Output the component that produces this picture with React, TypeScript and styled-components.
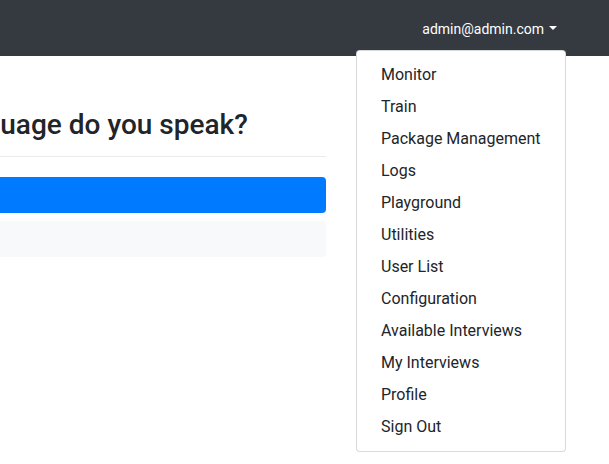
import styled, { createGlobalStyle } from "styled-components";

const menuItems = [
  "Monitor",
  "Train",
  "Package Management",
  "Logs",
  "Playground",
  "Utilities",
  "User List",
  "Configuration",
  "Available Interviews",
  "My Interviews",
  "Profile",
  "Sign Out",
];

const GlobalStyle = createGlobalStyle`
  html, body {
    margin: 0;
    padding: 0;
    overflow: hidden;
    background: #fff;
  }
  body {
    font-family: Roboto, "Liberation Sans", sans-serif;
    font-size: 16px;
    line-height: 1.5;
    color: #212529;
  }
  * {
    box-sizing: border-box;
  }
`;

const Page = styled.div`
  width: 609px;
  height: 464px;
  overflow: hidden;
`;

const Navbar = styled.nav`
  height: 56px;
  padding: 8px 44px 8px 16px;
  background: #343a40;
  display: flex;
  justify-content: flex-end;
  align-items: flex-start;
`;

const NavItem = styled.div`
  position: relative;
`;

const NavLink = styled.a`
  display: block;
  padding: 11px 8px 9px;
  font-size: 14px;
  line-height: 21px;
  color: #fff;
  text-decoration: none;
  cursor: pointer;

  &::after {
    content: "";
    display: inline-block;
    margin-left: 5px;
    vertical-align: 4px;
    border-top: 4px solid;
    border-right: 4px solid transparent;
    border-left: 4px solid transparent;
    border-bottom: 0;
  }
`;

const Menu = styled.div`
  position: absolute;
  top: 100%;
  right: -1px;
  margin-top: 1px;
  width: 210px;
  padding: 8px 0;
  background: #fff;
  border: 1px solid rgba(0, 0, 0, 0.15);
  border-radius: 4px;
  z-index: 10;
`;

const MenuItem = styled.a`
  display: block;
  padding: 4px 24px;
  color: #212529;
  white-space: nowrap;
  text-decoration: none;
`;

const Main = styled.main`
  padding-top: 52px;
  display: flex;
`;

const Column = styled.div`
  margin-left: -125px;
  width: 451px;
  flex-shrink: 0;
`;

const Header = styled.div`
  padding-bottom: 14px;
  border-bottom: 1px solid #e9ecef;
`;

const Title = styled.h3`
  margin: 0;
  font-size: 28px;
  font-weight: 500;
  line-height: 1.2;
  white-space: nowrap;
`;

const Choice = styled.div<{ $active?: boolean }>`
  height: 36px;
  border-radius: 4px;
  background: ${(p) => (p.$active ? "#007bff" : "#f8f9fa")};
  margin-top: ${(p) => (p.$active ? "20px" : "8px")};
`;

export default function App() {
  return (
    <Page>
      <GlobalStyle />
      <Navbar>
        <NavItem>
          <NavLink>admin@admin.com</NavLink>
          <Menu>
            {menuItems.map((item) => (
              <MenuItem key={item}>{item}</MenuItem>
            ))}
          </Menu>
        </NavItem>
      </Navbar>
      <Main>
        <Column>
          <Header>
            <Title>What language do you speak?</Title>
          </Header>
          <Choice $active />
          <Choice />
        </Column>
      </Main>
    </Page>
  );
}
